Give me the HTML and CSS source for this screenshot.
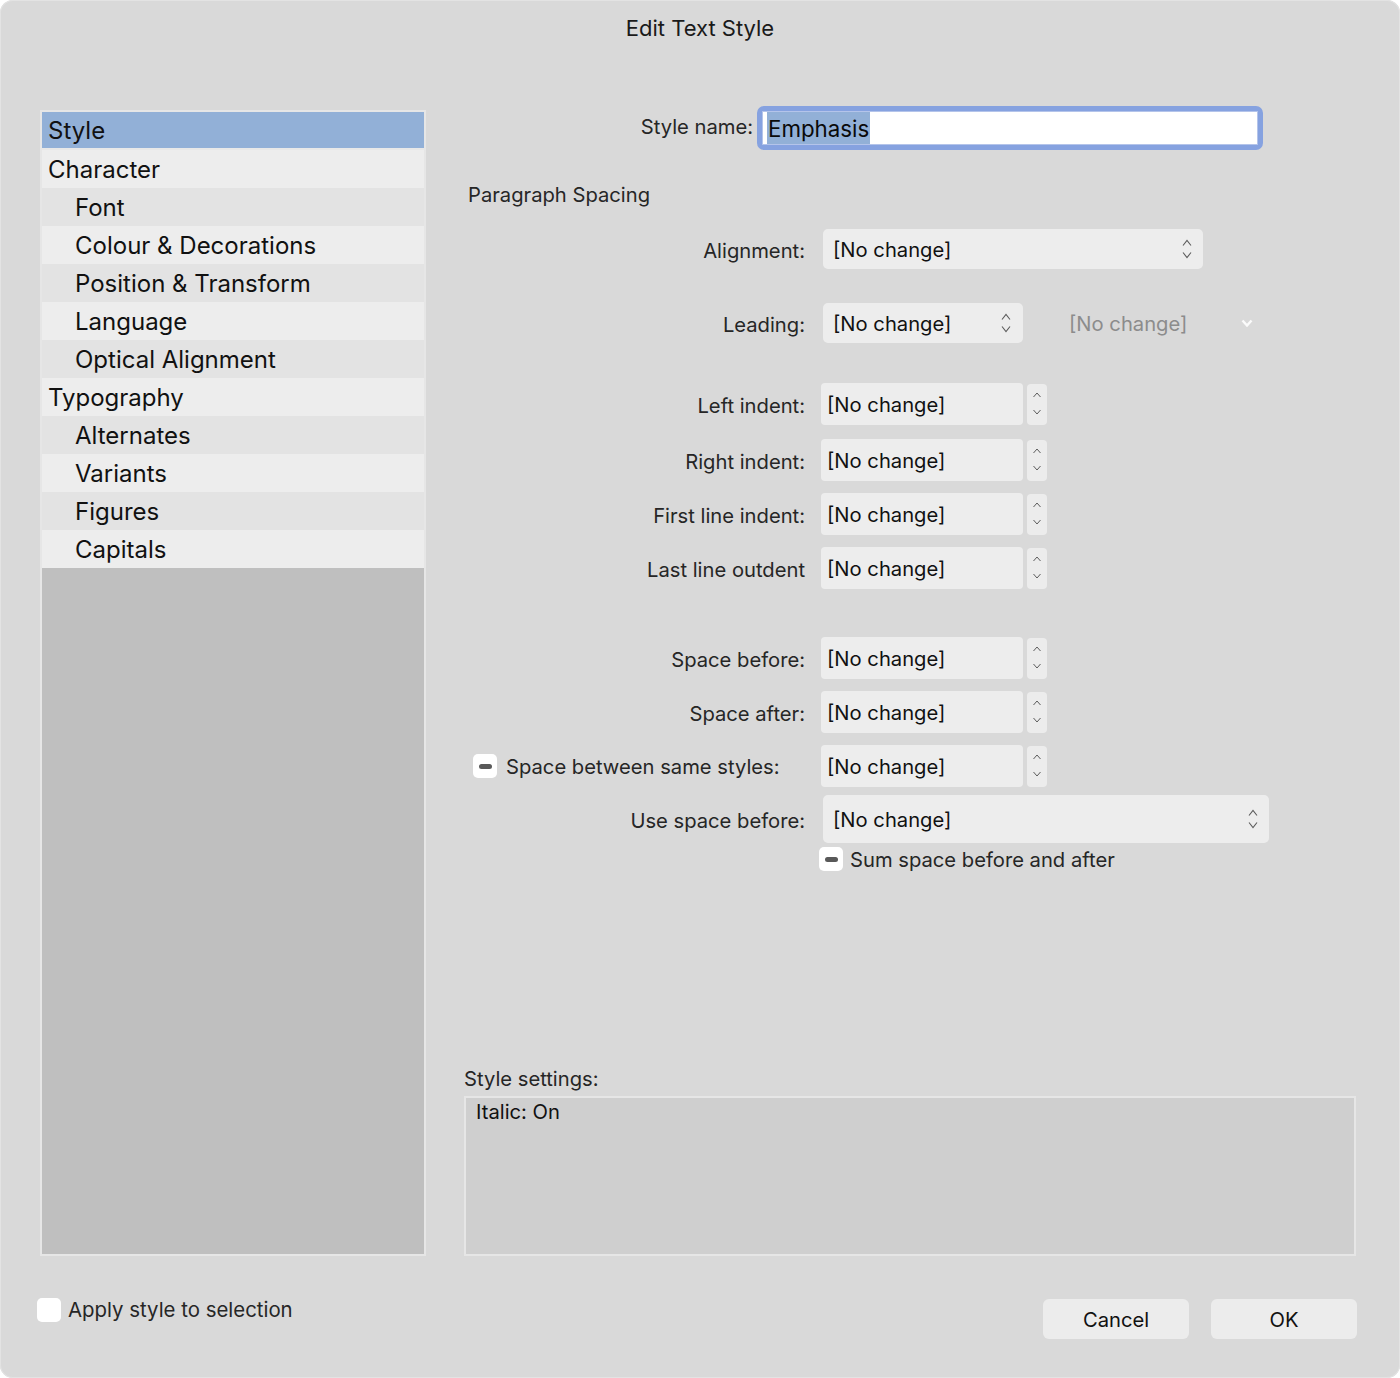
FILE: index.html
```html
<!DOCTYPE html>
<html lang="en">
<head>
<meta charset="utf-8">
<title>Edit Text Style</title>
<link rel="stylesheet" href="styles.css">
</head>
<body>
<div class="dialog">
  <div class="title">Edit Text Style</div>
  <div class="main">
    <div class="sidebar">
      <div class="item top selected">Style</div>
      <div class="item top">Character</div>
      <div class="item sub alt">Font</div>
      <div class="item sub">Colour &amp; Decorations</div>
      <div class="item sub alt">Position &amp; Transform</div>
      <div class="item sub">Language</div>
      <div class="item sub alt">Optical Alignment</div>
      <div class="item top">Typography</div>
      <div class="item sub alt">Alternates</div>
      <div class="item sub">Variants</div>
      <div class="item sub alt">Figures</div>
      <div class="item sub">Capitals</div>
    </div>
    <div class="panel">
      <div class="name-row">
        <span class="name-label">Style name:</span>
        <div class="focus-ring"><div class="name-input"><span class="sel">Emphasis</span></div></div>
      </div>
      <div class="section-title">Paragraph Spacing</div>

      <div class="row r-align">
        <span class="label">Alignment:</span>
        <div class="popup wide">[No change]<svg class="chev" width="10" height="20" viewBox="0 0 10 20"><path d="M1 6.5 L5 1.5 L9 6.5 M1 13.5 L5 18.5 L9 13.5"/></svg></div>
      </div>

      <div class="row r-leading">
        <span class="label">Leading:</span>
        <div class="popup narrow">[No change]<svg class="chev" width="10" height="20" viewBox="0 0 10 20"><path d="M1 6.5 L5 1.5 L9 6.5 M1 13.5 L5 18.5 L9 13.5"/></svg></div>
        <div class="disabled-pop">[No change]<svg class="dchev" width="12" height="8" viewBox="0 0 12 8"><path d="M1.5 1.5 L6 6.5 L10.5 1.5"/></svg></div>
      </div>

      <div class="row r-left">
        <span class="label">Left indent:</span>
        <div class="field">[No change]</div>
        <div class="stepper"><svg width="10" height="24" viewBox="0 0 10 24"><path d="M1.5 5 L5 1 L8.5 5 M1.5 18 L5 22 L8.5 18"/></svg></div>
      </div>
      <div class="row r-right">
        <span class="label">Right indent:</span>
        <div class="field">[No change]</div>
        <div class="stepper"><svg width="10" height="24" viewBox="0 0 10 24"><path d="M1.5 5 L5 1 L8.5 5 M1.5 18 L5 22 L8.5 18"/></svg></div>
      </div>
      <div class="row r-next">
        <span class="label">First line indent:</span>
        <div class="field">[No change]</div>
        <div class="stepper"><svg width="10" height="24" viewBox="0 0 10 24"><path d="M1.5 5 L5 1 L8.5 5 M1.5 18 L5 22 L8.5 18"/></svg></div>
      </div>
      <div class="row r-next">
        <span class="label">Last line outdent</span>
        <div class="field">[No change]</div>
        <div class="stepper"><svg width="10" height="24" viewBox="0 0 10 24"><path d="M1.5 5 L5 1 L8.5 5 M1.5 18 L5 22 L8.5 18"/></svg></div>
      </div>

      <div class="row r-before">
        <span class="label">Space before:</span>
        <div class="field">[No change]</div>
        <div class="stepper"><svg width="10" height="24" viewBox="0 0 10 24"><path d="M1.5 5 L5 1 L8.5 5 M1.5 18 L5 22 L8.5 18"/></svg></div>
      </div>
      <div class="row r-next">
        <span class="label">Space after:</span>
        <div class="field">[No change]</div>
        <div class="stepper"><svg width="10" height="24" viewBox="0 0 10 24"><path d="M1.5 5 L5 1 L8.5 5 M1.5 18 L5 22 L8.5 18"/></svg></div>
      </div>
      <div class="row r-next">
        <span class="label check-label"><span class="mixed-box"><span class="dash"></span></span><span class="ctext">Space between same styles:</span></span>
        <div class="field">[No change]</div>
        <div class="stepper"><svg width="10" height="24" viewBox="0 0 10 24"><path d="M1.5 5 L5 1 L8.5 5 M1.5 18 L5 22 L8.5 18"/></svg></div>
      </div>

      <div class="row r-use">
        <span class="label">Use space before:</span>
        <div class="popup tall">[No change]<svg class="chev" width="10" height="20" viewBox="0 0 10 20"><path d="M1 6.5 L5 1.5 L9 6.5 M1 13.5 L5 18.5 L9 13.5"/></svg></div>
      </div>
      <div class="row r-sum">
        <span class="label"></span>
        <div class="sum"><span class="mixed-box"><span class="dash"></span></span><span class="stext">Sum space before and after</span></div>
      </div>

      <div class="settings">
        <div class="settings-label">Style settings:</div>
        <div class="settings-box">Italic: On</div>
      </div>
    </div>
  </div>
  <div class="footer">
    <label class="apply"><span class="box"></span>Apply style to selection</label>
    <div class="buttons">
      <div class="btn">Cancel</div>
      <div class="btn">OK</div>
    </div>
  </div>
</div>
</body>
</html>
```

FILE: styles.css
```css
* { box-sizing: border-box; }
html, body { margin: 0; padding: 0; background: #ffffff; }
body {
  font-family: Inter, "Noto Sans", "Liberation Sans", sans-serif;
  color: #1c1c1c;
}
.dialog {
  width: 1400px;
  height: 1378px;
  background: #d9d9d9;
  border-radius: 13px;
  box-shadow: inset 0 0 0 1px #e3e3e3;
  display: flex;
  flex-direction: column;
  overflow: hidden;
}
.title {
  height: 106px;
  padding-top: 14px;
  text-align: center;
  font-size: 22px;
  line-height: 28px;
  color: #1a1a1a;
}
.main {
  display: flex;
  height: 1150px;
  padding-left: 40px;
}
.sidebar {
  margin-top: 4px;
  width: 386px;
  height: 1146px;
  border: 2px solid #e6e6e6;
  background: #bfbfbf;
  display: flex;
  flex-direction: column;
}
.item {
  height: 38px;
  padding-top: 2px;
  line-height: 36px;
  font-size: 24px;
  background: #ededed;
  color: #111;
  white-space: nowrap;
}
.item.alt { background: #e3e3e3; }
.item.top { padding-left: 6px; }
.item.sub { padding-left: 33px; }
.item.selected {
  background: #92b0d7;
  box-shadow: inset 0 -2px 0 #e8e8e8;
  padding-top: 1px;
  line-height: 36px;
}
.panel {
  margin-left: 38px;
  width: 892px;
  display: flex;
  flex-direction: column;
  font-size: 20.2px;
}
.name-row {
  display: flex;
  align-items: center;
  height: 44px;
}
.name-label {
  width: 289px;
  text-align: right;
  color: #262626;
  padding-bottom: 3px;
}
.focus-ring {
  margin-left: 4px;
  width: 506px;
  height: 44px;
  border: 5px solid #86a2e0;
  border-radius: 7px;
  background: #ffffff;
}
.name-input {
  height: 100%;
  border: 1px solid #b4c4ea;
  padding-left: 4px;
  display: flex;
  align-items: stretch;
  font-size: 22.3px;
}
.sel {
  background: #92b0d7;
  color: #0a0a0a;
  line-height: 33px;
  padding: 0 1px;
}
.section-title {
  margin-top: 33px;
  height: 24px;
  line-height: 24px;
  padding-left: 4px;
  color: #262626;
}
.row {
  display: flex;
  align-items: center;
}
.label {
  width: 341px;
  text-align: right;
  color: #262626;
  flex: none;
  padding-top: 3px;
}
.r-align { margin-top: 22px; height: 40px; }
.r-leading { margin-top: 34px; height: 40px; }
.r-left { margin-top: 40px; height: 42px; }
.r-right { margin-top: 14px; height: 42px; }
.r-next { margin-top: 12px; height: 42px; }
.r-before { margin-top: 48px; height: 42px; }
.r-use { margin-top: 8px; height: 48px; }
.r-sum { margin-top: 4px; height: 24px; }

.popup {
  margin-left: 18px;
  height: 40px;
  background: #ededed;
  border-radius: 5px;
  display: flex;
  align-items: center;
  justify-content: space-between;
  padding-left: 10px;
  color: #111;
}
.popup.wide { width: 380px; padding-right: 11px; }
.popup.narrow { width: 200px; padding-right: 12px; }
.popup.tall { width: 446px; height: 48px; padding-right: 11px; }
.chev path {
  fill: none;
  stroke: #5c5c5c;
  stroke-width: 1.1;
}
.disabled-pop {
  margin-left: 46px;
  width: 184px;
  display: flex;
  align-items: center;
  justify-content: space-between;
  color: #8c8c8c;
}
.dchev path {
  fill: none;
  stroke: #fbfbfb;
  stroke-width: 2.4;
}
.field {
  margin-left: 16px;
  width: 202px;
  height: 42px;
  background: #ededed;
  border-radius: 4px;
  padding-left: 6px;
  display: flex;
  align-items: center;
  color: #111;
}
.stepper {
  margin-left: 4px;
  width: 20px;
  height: 41px;
  background: #ececec;
  border-radius: 4px;
  display: flex;
  align-items: center;
  justify-content: center;
}
.stepper path {
  fill: none;
  stroke: #5c5c5c;
  stroke-width: 1;
}
.check-label {
  text-align: left;
  display: flex;
  align-items: center;
  padding-left: 9px;
  padding-top: 0;
}
.ctext { padding-top: 0; }
.stext { padding-top: 1px; }
.mixed-box {
  width: 24px;
  height: 24px;
  background: #ffffff;
  border-radius: 5px;
  display: inline-flex;
  align-items: center;
  justify-content: center;
  margin-right: 9px;
  flex: none;
}
.dash {
  width: 13px;
  height: 5px;
  border-radius: 3px;
  background: #595959;
}
.sum {
  margin-left: 14px;
  display: flex;
  align-items: center;
  color: #262626;
}
.sum .mixed-box { margin-right: 7px; }
.settings {
  margin-top: auto;
}
.settings-label {
  height: 24px;
  line-height: 24px;
  color: #262626;
}
.settings-box {
  margin-top: 5px;
  height: 160px;
  width: 892px;
  border: 2px solid #e6e6e6;
  background: #cfcfcf;
  padding: 1px 10px;
  line-height: 26px;
  color: #111;
}
.footer {
  flex: 1;
  display: flex;
  justify-content: space-between;
  align-items: flex-start;
  padding: 41px 43px 0 37px;
}
.apply {
  display: flex;
  align-items: center;
  font-size: 20.4px;
  color: #262626;
}
.apply .box {
  width: 24px;
  height: 24px;
  background: #ffffff;
  border-radius: 5px;
  margin-right: 7px;
}
.buttons {
  margin-top: 2px;
  display: flex;
  gap: 22px;
}
.btn {
  width: 146px;
  height: 40px;
  background: #ececec;
  border-radius: 6px;
  display: flex;
  align-items: center;
  justify-content: center;
  font-size: 20.2px;
  color: #111;
}
```
